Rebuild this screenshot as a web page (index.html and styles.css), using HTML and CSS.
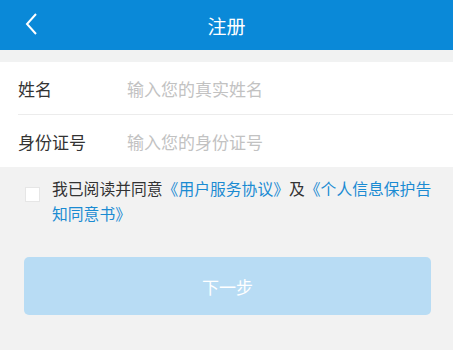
FILE: index.html
```html
<!DOCTYPE html>
<html lang="zh">
<head>
<meta charset="utf-8">
<link rel="stylesheet" href="styles.css">
</head>
<body>
<div class="page">
  <header class="nav">
    <svg class="back" width="14" height="24" viewBox="0 0 14 24"><path d="M12 2 L3 12 L12 22" fill="none" stroke="#fff" stroke-width="2"/></svg>
    <div class="title">注册</div>
  </header>
  <div class="gap"></div>
  <section class="form">
    <div class="row">
      <span class="label">姓名</span>
      <span class="ph">输入您的真实姓名</span>
    </div>
    <div class="row">
      <span class="label">身份证号</span>
      <span class="ph">输入您的身份证号</span>
    </div>
  </section>
  <div class="agree">
    <span class="box"></span>
    <p class="agree-text">我已阅读并同意<span class="link">《用户服务协议》</span>及<span class="link">《个人信息保护告知同意书》</span></p>
  </div>
  <div class="btn-wrap">
    <div class="btn">下一步</div>
  </div>
</div>
</body>
</html>
```
FILE: styles.css
```css
html, body {
  margin: 0;
  padding: 0;
  background: #f2f2f2;
  font-family: "Noto Sans CJK SC", "Noto Sans", sans-serif;
}
.page {
  width: 453px;
  height: 350px;
  background: #f2f2f2;
  overflow: hidden;
}
.nav {
  height: 50px;
  background: #0a89d8;
  display: flex;
  align-items: center;
  justify-content: center;
  position: relative;
}
.back {
  position: absolute;
  left: 24px;
  top: 12px;
}
.title {
  color: #fff;
  font-size: 19px;
}
.gap {
  height: 12px;
  background: #f1f2f2;
}
.form {
  background: #fff;
  padding-left: 18px;
}
.row {
  height: 52px;
  display: flex;
  align-items: center;
  font-size: 17px;
}
.row + .row {
  border-top: 1px solid #ececec;
}
.label {
  width: 109px;
  color: #333;
}
.ph {
  color: #c2c2c2;
}
.agree {
  display: flex;
  align-items: flex-start;
  padding: 9px 20px 0 25px;
}
.box {
  flex: none;
  width: 13px;
  height: 13px;
  background: #fff;
  border: 1px solid #e6e6e6;
  margin-top: 11px;
  margin-right: 12px;
}
.agree-text {
  margin: 0;
  font-size: 15.8px;
  line-height: 25px;
  color: #333;
}
.link {
  color: #1b8bd2;
}
.btn-wrap {
  padding: 31px 22px 0 24px;
}
.btn {
  height: 58px;
  border-radius: 5px;
  background: #b8dcf4;
  color: #fff;
  font-size: 17px;
  display: flex;
  align-items: center;
  justify-content: center;
}
```
